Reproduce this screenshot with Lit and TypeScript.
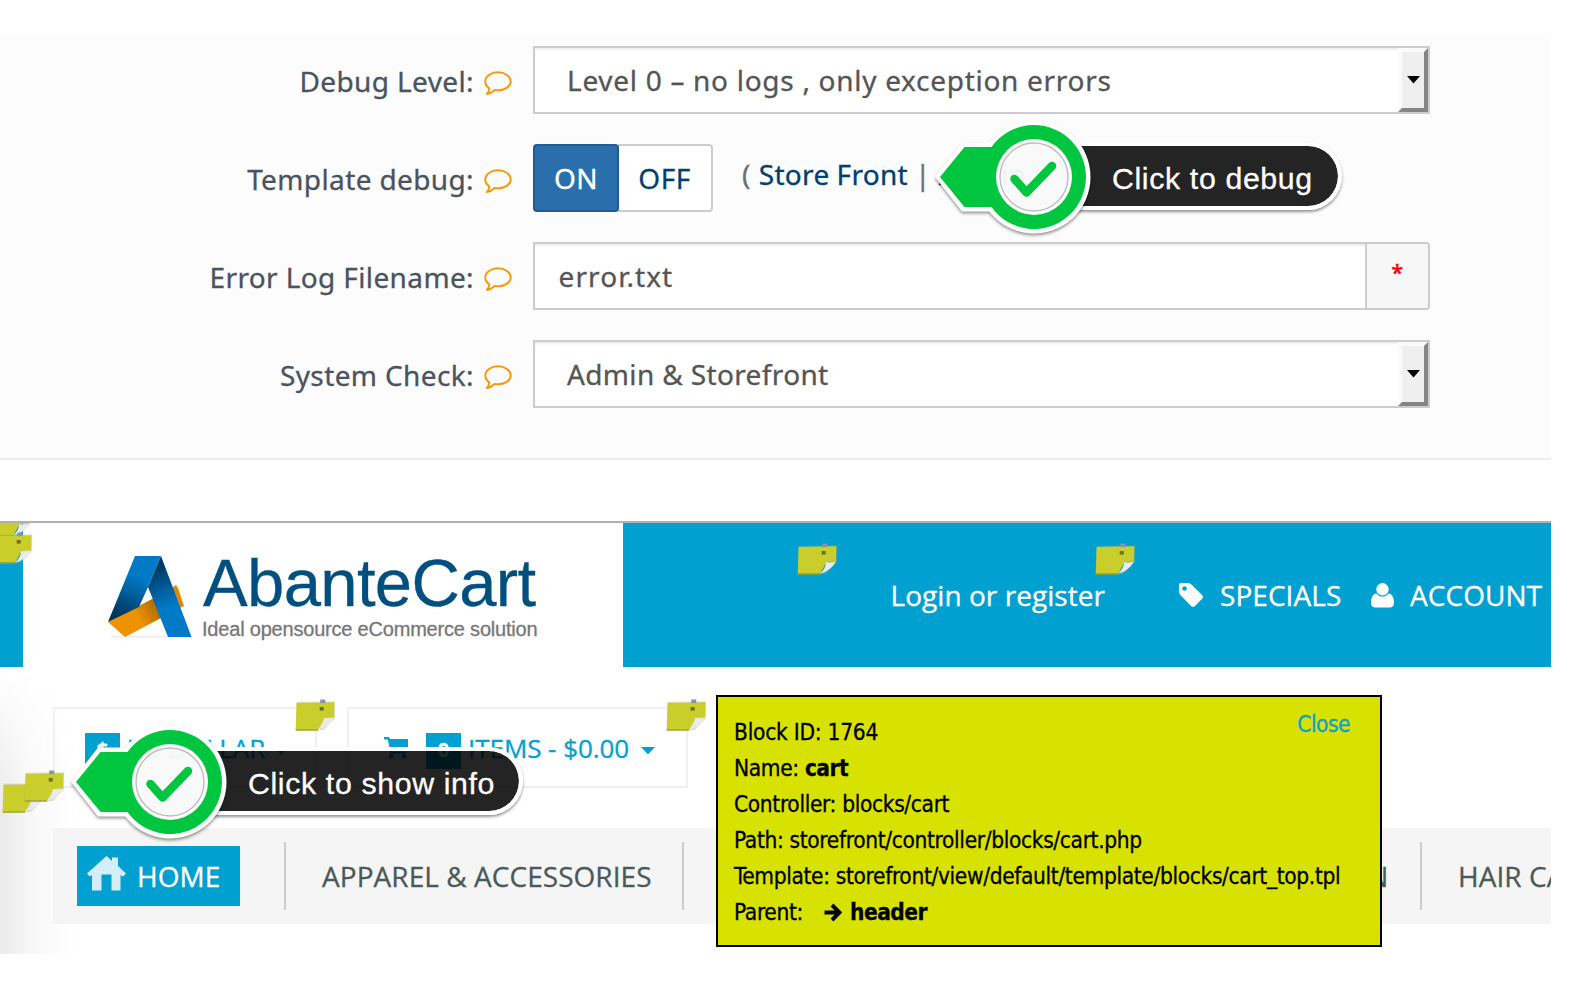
import { LitElement, html, css, svg } from "lit";
import { customElement, property } from "lit/decorators.js";

/** Yellow sticky note that marks a template block. */
@customElement("block-note")
export class BlockNote extends LitElement {
  static styles = css`
    :host { display: block; width: 41px; height: 33px; }
    svg { display: block; }
  `;
  render() {
    return html`<svg width="41" height="33" viewBox="0 0 39 33" preserveAspectRatio="none">
      <path d="M1.5 2.8 L38 2.5 L38.2 19 L27 31 L.4 32 Z" fill="#a8ab70" opacity=".4"/>
      <path d="M1.5 4 L37.5 3.2 L37 18.5 L28 19 L22 30.5 L.8 30.5 Z" fill="#c9ce2b"/>
      <path d="M.8 31 L22 31" stroke="#9fa02f" stroke-width="1.4" fill="none"/>
      <path d="M37 18.5 Q31 20 27.5 19 Q28 25 22 30.8 Q32 28 37 18.5Z" fill="#ebebee"/>
      <rect x="23.5" y="8" width="3.8" height="3.6" fill="#6d7023"/>
      <rect x="24" y=".5" width="4.8" height="3.6" fill="#8496ad"/>
    </svg>`;
  }
}

/** Annotation: arrow, check-mark badge and dark caption. */
@customElement("callout-tag")
export class CalloutTag extends LitElement {
  @property() text = "";
  @property({ type: Number }) width = 300;
  static styles = css`
    :host { display: block; position: relative; height: 120px; }
    .caption {
      position: absolute; left: 140px; top: 25px; height: 60px; box-sizing: content-box;
      border: 4px solid #fff; border-left: 0; border-radius: 0 34px 34px 0; box-shadow: 0 2px 3px rgba(0,0,0,.42);
      background: rgba(0,0,0,.86); background-clip: padding-box; color: #fff;
      font: 30.3px/65px "Liberation Sans", Arial, sans-serif; text-indent: 37px; white-space: nowrap;
      letter-spacing: .63px; -webkit-text-stroke: .3px #fff;
    }
    svg { position: absolute; left: 0; top: 0; overflow: visible; filter: drop-shadow(0 2px 1.5px rgba(0,0,0,.4)); }
  `;
  render() {
    return html`
      <div class="caption" style="width:${this.width}px">${this.text}</div>
      <svg width="160" height="120" viewBox="0 0 160 120">
        <g fill-rule="evenodd">
          <path d="M0 60 L27 25.5 H54.3 A56.5 56.5 0 1 1 54.3 94.5 H27 Z M99 26 A34 34 0 1 0 99 94 A34 34 0 1 0 99 26Z" fill="#fff"/>
          <path d="M5 60 L29.5 30 H56.5 A52 52 0 1 1 56.5 90 H29.5 Z M99 22 A38 38 0 1 0 99 98 A38 38 0 1 0 99 22Z" fill="#00c63f"/>
        </g>
        <circle cx="99" cy="60" r="34.2" fill="#fff" fill-opacity=".94"/>
        <circle cx="99" cy="60" r="34" fill="none" stroke="#bdbdbd" stroke-width="1.4"/>
        <path d="M79.5 62 L91.5 75.5 L117 49" fill="none" stroke="#00c63f" stroke-width="8.5" stroke-linecap="round" stroke-linejoin="round"/>
      </svg>`;
  }
}

const bubble = svg`<path d="M14 1.3 C21 1.3 26.7 5.4 26.7 10.4 C26.7 15.4 21 19.2 14.4 19.2 C13 19.2 11.8 19.1 10.7 18.9 C8.6 20.8 6.2 22.4 3 23 C4.4 21.4 5.2 19.6 5.3 17.3 C2.8 15.6 1.3 13.2 1.3 10.4 C1.3 5.4 7 1.3 14 1.3Z" fill="none" stroke="#f59a0c" stroke-width="2" stroke-linejoin="round"/>`;

@customElement("app-root")
export class AppRoot extends LitElement {
  static styles = css`
    :host { display: block; }
    .page { position: relative; width: 1592px; height: 1006px; overflow: hidden; background: #fff; box-sizing: border-box; padding-top: 34px; -webkit-text-stroke: .3px; }
    .settings { width: 1551px; height: 426px; box-sizing: border-box; padding-top: 12px; background: #fcfcfc; border-bottom: 2px solid #eee; display: flex; flex-direction: column; gap: 30px; }
    .row { display: flex; height: 68px; gap: 20px; font: 28px/68px "Noto Sans", sans-serif; color: #4a535e; white-space: nowrap; letter-spacing: .45px; }
    .label { width: 512px; margin-right: 1px; display: flex; justify-content: flex-end; align-items: center; gap: 10px; padding-top: 2px; box-sizing: border-box; letter-spacing: .38px; }
    .label svg { flex: none; margin-top: 5px; }
    .field { width: 897px; height: 68px; box-sizing: border-box; border: 2px solid #ccc; background: #fff; box-shadow: inset 0 2px 2px rgba(0,0,0,.07); display: flex; line-height: 64px; color: #555; }
    .value { flex: 1; padding-left: 32px; }
    .wide { letter-spacing: .71px; }
    .store-mode { letter-spacing: .36px; }
    .file .value { padding-left: 23.5px; letter-spacing: 1.1px; }
    .file { border-radius: 0 4px 4px 0; }
    .addon { width: 61px; border-left: 2px solid #ccc; background: #f7f7f7; color: #f00; text-align: center; font-size: 21px; line-height: 56px; border-radius: 0 2px 2px 0; -webkit-text-stroke: .6px; }
    .drop { width: 22px; height: 56px; border: 4px solid; border-color: #fafafa #858585 #858585 #fafafa; background: #efefef; display: flex; align-items: center; justify-content: center; }
    .toggle { display: flex; }
    .on, .off { box-sizing: border-box; height: 68px; border: 2px solid #ccc; line-height: 65px; text-align: center; }
    .on { position: relative; width: 86px; border-color: #205c92; background: #2a6fab; color: #fff; border-radius: 4px; }
    .off { width: 95px; margin-left: -1px; border-left: 0; border-radius: 0 4px 4px 0; background: #fff; color: #00406f; }
    .links { margin-left: 9px; line-height: 60px; color: #687078; letter-spacing: .32px; word-spacing: -.6px; }
    .links b { font-weight: 400; color: #00406f; margin-left: 1px; }
    .store { position: relative; margin-top: 61px; width: 1551px; height: 433px; overflow: hidden; }
    .shade { position: absolute; left: 0; top: 150px; width: 76px; height: 283px; background: linear-gradient(90deg, #e9e9e9, rgba(246,246,246,.8) 40%, rgba(255,255,255,0)); -webkit-mask-image: linear-gradient(180deg, transparent, #000 50%); mask-image: linear-gradient(180deg, transparent, #000 50%); }
    .top { position: relative; height: 146px; box-sizing: border-box; border-top: 2px solid #b0b0b0; background: #00a1d0; display: flex; padding-left: 23px; font: 28px/144px "Open Sans", sans-serif; color: #fff; white-space: nowrap; }
    .brand { width: 600px; height: 144px; background: #fff; display: flex; box-sizing: border-box; padding-left: 84px; }
    .brand svg { margin-top: 32px; flex: none; }
    .words { margin-left: 10px; display: flex; flex-direction: column; font-family: "Liberation Sans", Arial, sans-serif; }
    .name { font-size: 67px; line-height: 76px; margin-top: 21.5px; color: #00507f; letter-spacing: -.65px; }
    .slogan { font-size: 20px; line-height: 24px; margin-left: -1px; margin-top: -3.5px; color: #777; letter-spacing: -.2px; }
    .top nav { display: flex; align-items: center; letter-spacing: .05px; }
    .login { margin-left: 267.5px; width: 288px; }
    .tag { margin-right: 16.5px; flex: none; }
    .spec { width: 151px; }
    .user { margin-right: 16px; flex: none; }
    .boxes { display: flex; gap: 30px; margin: 40px 0 0 53px; position: relative; font: 26px/79px "Open Sans", sans-serif; color: #00a1d0; white-space: nowrap; }
    .box { height: 81px; box-sizing: border-box; border: 2px solid #f0f0f0; display: flex; align-items: center; }
    .box span { line-height: 76px; letter-spacing: -.05px; }
    .cur { width: 264px; padding-left: 30px; }
    .cart { width: 341px; padding-left: 35px; }
    .badge { width: 35px; height: 36px; margin-top: 7px; background: #00a1d0; color: #fff; font-weight: 700; font-size: 20px; line-height: 34px; text-align: center; margin-right: 7px; }
    .basket { margin-right: 18px; }
    .caret { margin-top: 6px; margin-left: 12px; }
    .cur .caret { margin-left: 9px; }
    .menu { position: relative; display: flex; align-items: center; margin: 40px 0 0 53px; width: 1498px; height: 96px; background: rgba(242,242,242,.8); font: 28px/96px "Open Sans", sans-serif; color: #4b5a58; white-space: nowrap; overflow: hidden; letter-spacing: .05px; }
    .home { margin-left: 24px; width: 163px; height: 60px; background: #00a1d0; color: #fff; display: flex; align-items: center; line-height: 60px; box-sizing: border-box; padding-left: 10px; flex: none; }
    .home svg { margin-right: 11px; margin-top: -5px; }
    .sep { width: 2px; height: 68px; background: #ccc; flex: none; }
    .s1 { margin: 0 36px 0 44px; }
    .c1 { width: 360px; flex: none; }
    .s2 { margin-right: 36px; }
    .c2 { width: 668.5px; text-align: right; margin-right: 31.5px; flex: none; }
    .s3 { margin-right: 36px; }
    .popup { position: absolute; left: 716px; top: 695px; width: 666px; height: 252px; box-sizing: border-box; border: 2px solid #000; background: #d8e200; color: #000; font: 22.5px/36px "DejaVu Sans Condensed", "DejaVu Sans", sans-serif; font-stretch: condensed; padding: 17px 0 0 16px; white-space: nowrap; letter-spacing: -.35px; }
    .id { letter-spacing: -.24px; }
    .popup b { letter-spacing: -.5px; }
    .popup svg { margin: 0 8px 0 20px; vertical-align: -2px; }
    .close { position: absolute; right: 30px; top: 9px; color: #0aa0d0; letter-spacing: -.5px; }
    .n { position: absolute; }
    .n1 { left: 796.5px; top: 542.5px; } .n2 { left: 1094.5px; top: 542.5px; }
    .n3 { left: 295px; top: 699px; } .n4 { left: 666px; top: 699px; }
    .n5 { left: 2px; top: 781px; } .n6 { left: 24px; top: 770px; }
    .n7 { left: -8px; top: 9px; } .n8 { left: -10px; top: -18px; }
    .corner { position: absolute; left: 0; top: 523px; width: 60px; height: 60px; overflow: hidden; }
    .co1 { position: absolute; left: 935px; top: 117px; }
    .co2 { position: absolute; left: 71px; top: 722px; }
  `;

  private label(text: string) {
    return html`<div class="label"><span>${text}</span><svg width="28" height="25" viewBox="0 0 28 25">${bubble}</svg></div>`;
  }
  private arrow() {
    return html`<div class="drop"><svg width="13" height="8" viewBox="0 0 13 8"><path d="M0 0H13L6.5 7.5Z" fill="#000"/></svg></div>`;
  }

  render() {
    return html`<div class="page">
      <section class="settings">
        <div class="row">${this.label("Debug Level:")}<div class="field"><span class="value wide">Level 0 – no logs , only exception errors</span>${this.arrow()}</div></div>
        <div class="row">${this.label("Template debug:")}
          <div class="toggle"><div class="on">ON</div><div class="off">OFF</div></div>
          <div class="links">( <b>Store Front</b> | <b>Admin</b> )</div></div>
        <div class="row">${this.label("Error Log Filename:")}<div class="field file"><span class="value">error.txt</span><div class="addon">*</div></div></div>
        <div class="row">${this.label("System Check:")}<div class="field"><span class="value store-mode">Admin &amp; Storefront</span>${this.arrow()}</div></div>
      </section>

      <section class="store">
        <div class="shade"></div>
        <header class="top">
          <div class="brand">
            <svg width="86" height="84" viewBox="0 0 86 84">
              <defs>
                <linearGradient id="a" gradientUnits="userSpaceOnUse" x1="42" y1="5" x2="14" y2="66"><stop offset=".3" stop-color="#007ac6"/><stop offset="1" stop-color="#003052"/></linearGradient>
                <linearGradient id="b" gradientUnits="userSpaceOnUse" x1="50" y1="12" x2="66" y2="50"><stop offset="0" stop-color="#003a62"/><stop offset=".35" stop-color="#004f86"/><stop offset="1" stop-color="#007ac6"/></linearGradient>
                <linearGradient id="c" gradientUnits="userSpaceOnUse" x1="28" y1="66" x2="54" y2="52"><stop offset=".15" stop-color="#ee9200"/><stop offset="1" stop-color="#a86800"/></linearGradient>
              </defs>
              <path d="M4 81 H84 V82.5 H4Z" fill="#ececec"/>
              <path d="M66 32 L69 30 L71 33 L77 51 L66 56 Z" fill="#dc8a08"/>
              <path d="M1 67 L47 43 L56 62 L18 82 Z" fill="url(#c)"/>
              <path d="M28 1 H54 L41 32 L32 52 L1 67 Z" fill="url(#a)"/>
              <path d="M54 1 L84.5 82 H61 L41 32 Z" fill="url(#b)"/>
            </svg>
            <div class="words"><div class="name">AbanteCart</div><div class="slogan">Ideal opensource eCommerce solution</div></div>
          </div>
          <nav>
            <div class="login">Login or register</div>
            <svg class="tag" width="25" height="25" viewBox="0 0 25 25"><path fill-rule="evenodd" d="M1.8 0 H9 Q11 .2 12.6 1.8 L23.3 12.2 Q24.8 14 23.3 15.6 L15.8 23.2 Q14 24.7 12.3 23.2 L1.8 12.4 Q.2 10.8 0 8.8 V1.8 Q.2 .2 1.8 0Z M5.5 3.2 A2.3 2.3 0 1 0 5.5 7.8 A2.3 2.3 0 1 0 5.5 3.2Z" fill="#fff"/></svg>
            <div class="spec">SPECIALS</div>
            <svg class="user" width="23" height="25" viewBox="0 0 23 25"><circle cx="11.5" cy="6.3" r="6.2" fill="#fff"/><path d="M5.3 10.5 C8.5 14.6 14.5 14.6 17.7 10.5 C21.5 11 23 15.5 23 19.5 Q23 24.5 18.5 24.5 H4.5 Q0 24.5 0 19.5 C0 15.5 1.5 11 5.3 10.5Z" fill="#fff"/></svg>
            <span>ACCOUNT</span>
          </nav>
        </header>
        <div class="boxes">
          <div class="box cur"><div class="badge">$</div><span>US DOLLAR</span><svg class="caret" width="14" height="8"><path d="M0 0H14L7 7.5Z" fill="#00a1d0"/></svg></div>
          <div class="box cart"><svg class="basket" width="24" height="22" viewBox="0 0 24 22"><path d="M0 0 H5 L6 2 H24 V10.5 L7.5 12.5 V14.5 H22 V16.5 H5.8 L6 13 L3.8 2.5 H0Z" fill="#00a1d0"/><circle cx="7.3" cy="19.3" r="2.2" fill="#00a1d0"/><circle cx="20" cy="19.3" r="2.2" fill="#00a1d0"/></svg><div class="badge">0</div><span>ITEMS - $0.00</span><svg class="caret" width="14" height="8"><path d="M0 0H14L7 7.5Z" fill="#00a1d0"/></svg></div>
        </div>
        <nav class="menu">
          <div class="home"><svg width="39" height="35" viewBox="0 0 39 35"><path d="M19.5 0 L25 5 V1.5 H31 V10 L39 17.5 L36 20.5 L33.5 19 V34.5 H24.5 V18.5 H14.5 V34.5 H5 V19 L2.8 20.5 L0 17.5Z" fill="#d4eef7"/></svg>HOME</div>
          <div class="sep s1"></div><div class="c1">APPAREL &amp; ACCESSORIES</div>
          <div class="sep s2"></div><div class="c2">MEN</div>
          <div class="sep s3"></div><span>HAIR CARE</span>
        </nav>
      </section>

      <block-note class="n n1"></block-note><block-note class="n n2"></block-note>
      <block-note class="n n3"></block-note><block-note class="n n4"></block-note>
      <block-note class="n n5"></block-note><block-note class="n n6"></block-note>
      <div class="corner"><block-note class="n n8"></block-note><block-note class="n n7"></block-note></div>

      <div class="popup">
        <div class="id">Block ID: 1764</div>
        <div>Name: <b>cart</b></div>
        <div>Controller: blocks/cart</div>
        <div>Path: storefront/controller/blocks/cart.php</div>
        <div>Template: storefront/view/default/template/blocks/cart_top.tpl</div>
        <div>Parent:<svg width="19" height="19" viewBox="0 0 19 19"><path d="M1.5 9.5H16M9 2L16.5 9.5L9 17" fill="none" stroke="#000" stroke-width="4"/></svg><b>header</b></div>
        <span class="close">Close</span>
      </div>

      <callout-tag class="co1" text="Click to debug" width="263"></callout-tag>
      <callout-tag class="co2" text="Click to show info" width="308"></callout-tag>
    </div>`;
  }
}
